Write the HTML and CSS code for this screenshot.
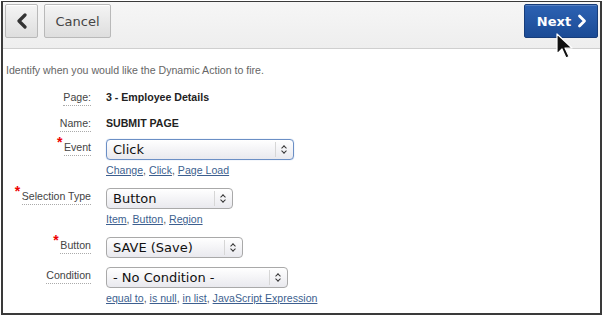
FILE: index.html
```html
<!doctype html>
<html lang="en">
  <head>
    <meta charset="UTF-8" />
    <title>Create Dynamic Action - When</title>
    <link rel="stylesheet" href="styles.css">
  </head>
  <body>
    <div class="wizard">
      <div class="wizard-bar">
        <button class="btn btn-back" title="Previous">
          <svg width="12" height="16" viewBox="0 0 12 16">
            <path d="M9 2 L3 8 L9 14" fill="none" stroke="#333" stroke-width="3.2" stroke-linecap="round" stroke-linejoin="round" />
          </svg>
        </button>
        <button class="btn btn-cancel">Cancel</button>
        <span class="spacer"></span>
        <button class="btn btn-next">
          Next
          <svg width="10" height="14" viewBox="0 0 10 14">
            <path d="M2.5 2 L7.5 7 L2.5 12" fill="none" stroke="#fff" stroke-width="2.8" stroke-linecap="round" stroke-linejoin="round" />
          </svg>
        </button>
        <!-- mouse pointer hovering over Next -->
        <svg class="pointer" width="18" height="28" viewBox="0 0 18 28">
          <path d="M1 1 L1 21 L6 16 L10 25 L13 23.5 L9 15 L16 15 Z" fill="#111" stroke="#fff" stroke-width="1.2" stroke-linejoin="round" />
        </svg>
      </div>

      <div class="wizard-body">
        <p class="intro">Identify when you would like the Dynamic Action to fire.</p>

        <div class="form">
          <div class="row row-text">
            <span class="label">Page:</span>
            <span class="value">3 - Employee Details</span>
          </div>
          <div class="row row-text row-last-text">
            <span class="label">Name:</span>
            <span class="value">SUBMIT PAGE</span>
          </div>

          <div class="row">
            <span class="label required">Event</span>
            <div class="field">
              <div class="select select-focus w-event">
                <span>Click</span>
                <span class="caret"></span>
              </div>
              <div class="shortcuts">
                <a href="#">Change</a>, <a href="#">Click</a>, <a href="#">Page Load</a>
              </div>
            </div>
          </div>

          <div class="row">
            <span class="label required">Selection Type</span>
            <div class="field">
              <div class="select w-type">
                <span>Button</span>
                <span class="caret"></span>
              </div>
              <div class="shortcuts">
                <a href="#">Item</a>, <a href="#">Button</a>, <a href="#">Region</a>
              </div>
            </div>
          </div>

          <div class="row">
            <span class="label required">Button</span>
            <div class="field">
              <div class="select w-button">
                <span>SAVE (Save)</span>
                <span class="caret"></span>
              </div>
            </div>
          </div>

          <div class="row">
            <span class="label">Condition</span>
            <div class="field">
              <div class="select w-cond">
                <span>- No Condition -</span>
                <span class="caret"></span>
              </div>
              <div class="shortcuts">
                <a href="#">equal to</a>, <a href="#">is null</a>, <a href="#">in list</a>, <a href="#">JavaScript Expression</a>
              </div>
            </div>
          </div>
        </div>
      </div>
    </div>
  </body>
</html>
```

FILE: styles.css
```css
* {
  margin: 0;
  padding: 0;
  box-sizing: border-box;
}

body {
  font-family: 'Liberation Sans', Arial, sans-serif;
  background: #fff;
  width: 603px;
  height: 317px;
  overflow: hidden;
}

.wizard {
  margin: 1px 1px 0 1px;
  height: 314px;
  border: 1px solid #3a3a3a;
  border-left-width: 2px;
  border-right-width: 2px;
  border-bottom-width: 2px;
  background: #fff;
}

.wizard-bar {
  position: relative;
  display: flex;
  align-items: flex-start;
  gap: 6px;
  height: 47px;
  padding: 2px 2px 0 2px;
  background: linear-gradient(#f6f6f6, #eeeeee);
  border-bottom: 1px solid #cfcfcf;
}

.spacer {
  flex: 1;
}

.btn {
  display: flex;
  align-items: center;
  justify-content: center;
  height: 34px;
  border-radius: 2px;
  font-family: 'DejaVu Sans', sans-serif;
  font-size: 13px;
  cursor: pointer;
}

.btn-back,
.btn-cancel {
  border: 1px solid #b9b9b9;
  background: linear-gradient(#f4f4f4, #dedede);
  color: #444;
  box-shadow: inset 0 1px 0 #fff;
}

.btn-back {
  width: 33px;
}

.btn-cancel {
  width: 67px;
}

.btn-next {
  width: 74px;
  gap: 6px;
  border: 1px solid #173d7a;
  background: linear-gradient(#2d62b3, #1b4b95);
  color: #fff;
  font-weight: bold;
  box-shadow: inset 0 1px 0 rgba(255, 255, 255, 0.2);
  padding-left: 2px;
}

.pointer {
  position: absolute;
  left: 553px;
  top: 31px;
}

.wizard-body {
  padding: 15px 0 0 3px;
}

.intro {
  font-size: 10.6px;
  color: #666;
  margin-bottom: 15px;
}

.form {
  display: flex;
  flex-direction: column;
}

.row {
  display: grid;
  grid-template-columns: 85px 1fr;
  column-gap: 15px;
  align-items: start;
  margin-bottom: 9px;
}

.row-text {
  margin-bottom: 11px;
}

.row-last-text {
  margin-bottom: 7px;
}

.label {
  justify-self: end;
  position: relative;
  font-size: 10.6px;
  color: #444;
  padding-bottom: 2px;
  border-bottom: 1px dotted #aaa;
  margin-top: 2px;
}

.row-text .label {
  margin-top: 0;
}

.required::before {
  content: '*';
  position: absolute;
  left: -7px;
  top: -7px;
  color: #e00;
  font-size: 14px;
  font-weight: bold;
}

.value {
  font-size: 10.6px;
  font-weight: bold;
  color: #222;
}

.field {
  display: flex;
  flex-direction: column;
  align-items: flex-start;
}

.select {
  position: relative;
  display: flex;
  align-items: center;
  height: 21px;
  padding-left: 6px;
  border: 1px solid #a9a9a9;
  border-radius: 4px;
  background: linear-gradient(#ffffff, #e9e9ee);
  font-family: 'DejaVu Sans', sans-serif;
  font-size: 13px;
  color: #111;
}

.select-focus {
  border-color: #6b8fc5;
  box-shadow: 0 0 1px #8fb0e0;
}

.caret {
  position: absolute;
  right: 0;
  top: 2px;
  bottom: 2px;
  width: 18px;
  border-left: 1px solid #d6d6d6;
}

.caret::before,
.caret::after {
  content: '';
  position: absolute;
  left: 6px;
  width: 3px;
  height: 3px;
  border-left: 1.5px solid #333;
  border-top: 1.5px solid #333;
}

.caret::before {
  top: 4px;
  transform: rotate(45deg);
}

.caret::after {
  bottom: 4px;
  transform: rotate(-135deg);
}

.w-event {
  width: 188px;
}

.w-type {
  width: 127px;
}

.w-button {
  width: 137px;
}

.w-cond {
  width: 182px;
}

.shortcuts {
  margin-top: 4px;
  padding-bottom: 3px;
  font-size: 10.6px;
  color: #555;
}

.shortcuts a {
  color: #3d5f8f;
  text-decoration: underline;
}
```
